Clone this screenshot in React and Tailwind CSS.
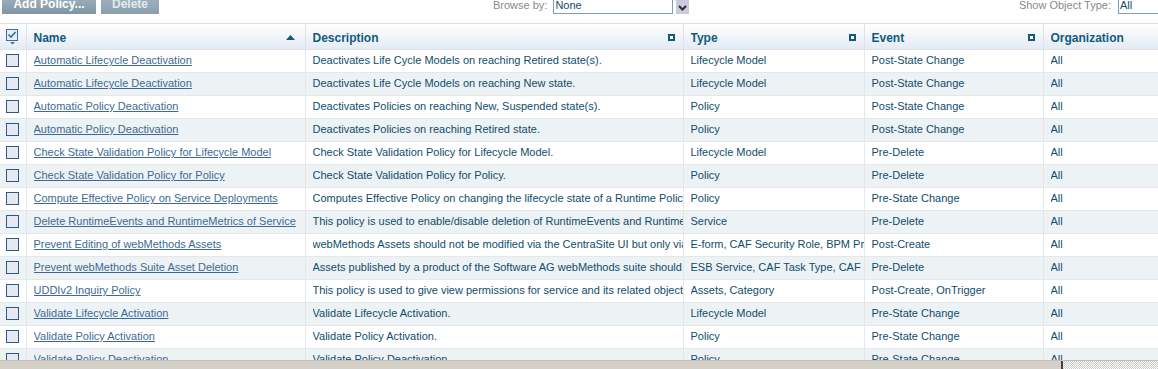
import React from 'react';

const rows = [
  ['Automatic Lifecycle Deactivation', 'Deactivates Life Cycle Models on reaching Retired state(s).', 'Lifecycle Model', 'Post-State Change', 'All'],
  ['Automatic Lifecycle Deactivation', 'Deactivates Life Cycle Models on reaching New state.', 'Lifecycle Model', 'Post-State Change', 'All'],
  ['Automatic Policy Deactivation', 'Deactivates Policies on reaching New, Suspended state(s).', 'Policy', 'Post-State Change', 'All'],
  ['Automatic Policy Deactivation', 'Deactivates Policies on reaching Retired state.', 'Policy', 'Post-State Change', 'All'],
  ['Check State Validation Policy for Lifecycle Model', 'Check State Validation Policy for Lifecycle Model.', 'Lifecycle Model', 'Pre-Delete', 'All'],
  ['Check State Validation Policy for Policy', 'Check State Validation Policy for Policy.', 'Policy', 'Pre-Delete', 'All'],
  ['Compute Effective Policy on Service Deployments', 'Computes Effective Policy on changing the lifecycle state of a Runtime Policy', 'Policy', 'Pre-State Change', 'All'],
  ['Delete RuntimeEvents and RuntimeMetrics of Service', 'This policy is used to enable/disable deletion of RuntimeEvents and RuntimeMetrics of a Service', 'Service', 'Pre-Delete', 'All'],
  ['Prevent Editing of webMethods Assets', 'webMethods Assets should not be modified via the CentraSite UI but only via webMethods Designer', 'E-form, CAF Security Role, BPM Process', 'Post-Create', 'All'],
  ['Prevent webMethods Suite Asset Deletion', 'Assets published by a product of the Software AG webMethods suite should not be deleted', 'ESB Service, CAF Task Type, CAF Service', 'Pre-Delete', 'All'],
  ['UDDIv2 Inquiry Policy', 'This policy is used to give view permissions for service and its related objects', 'Assets, Category', 'Post-Create, OnTrigger', 'All'],
  ['Validate Lifecycle Activation', 'Validate Lifecycle Activation.', 'Lifecycle Model', 'Pre-State Change', 'All'],
  ['Validate Policy Activation', 'Validate Policy Activation.', 'Policy', 'Pre-State Change', 'All'],
  ['Validate Policy Deactivation', 'Validate Policy Deactivation.', 'Policy', 'Pre-State Change', 'All'],
];

function FilterIcon() {
  return <span className="inline-block w-[7px] h-[7px] border-2 border-[#135a7d] bg-white" />;
}

function HeadCell({ children, last, icon }) {
  return (
    <th className={`h-[25px] pl-[7px] pr-2 pt-[3px] text-left font-bold text-[12px] text-[#135a7d] border-b border-[#dde3ea] ${last ? '' : 'border-r border-r-[#dfe3e8]'}`}>
      <div className="flex items-center justify-between whitespace-nowrap overflow-hidden">
        <span>{children}</span>
        {icon}
      </div>
    </th>
  );
}

function Cell({ children, last }) {
  return (
    <td className={`pl-[7px] pr-0 border-b border-[#e3e7ea] text-[#0f4d6d] ${last ? '' : 'border-r'}`}>
      <div className="whitespace-nowrap overflow-hidden">{children}</div>
    </td>
  );
}

export default function App() {
  return (
    <div className="w-[1158px] h-[369px] flex flex-col bg-white overflow-hidden text-[11px]" style={{ fontFamily: '"Liberation Sans", Arial, sans-serif' }}>
      {/* toolbar */}
      <div className="h-[14px] flex items-end shrink-0 overflow-hidden">
        <button className="ml-[2px] w-[94px] h-[22px] bg-gradient-to-b from-[#a9b9c4] to-[#7f95a4] text-white font-bold text-[12px] leading-none flex items-end justify-center pb-[4px]">
          Add Policy...
        </button>
        <button className="ml-[5px] w-[58px] h-[22px] bg-gradient-to-b from-[#a9b9c4] to-[#8a9eac] text-[#e4eaee] font-bold text-[12px] leading-none flex items-end justify-center pb-[4px]">
          Delete
        </button>
        <div className="ml-[334px] flex items-end h-full">
          <span className="text-[#8a8a8a] text-[11px] leading-none mb-[3px]">Browse by:</span>
          <div className="ml-[6px] w-[120px] h-[16px] border border-[#7f9db9] text-[#12496d] leading-none flex items-end pl-[1px] pb-[2px]">None</div>
          <div className="ml-[3px] w-[13px] h-[16px] bg-[#c9cbda] flex items-end justify-center pb-[3px]">
            <svg width="9" height="6" viewBox="0 0 9 6"><path d="M1 1l3.5 3.5L8 1" stroke="#2b2b3a" strokeWidth="2" fill="none" /></svg>
          </div>
        </div>
        <div className="ml-auto flex items-end h-full">
          <span className="text-[#8a8a8a] text-[11px] leading-none mb-[3px]">Show Object Type:</span>
          <div className="ml-[7px] w-[40px] h-[16px] border border-[#7f9db9] border-r-0 text-[#12496d] leading-none flex items-end pl-[1px] pb-[2px]">All</div>
        </div>
      </div>

      {/* table */}
      <div className="mt-[9px] flex-1 overflow-hidden border-t border-[#dedede]">
        <table className="table-fixed border-collapse w-[1158px]">
          <colgroup>
            <col className="w-[26px]" />
            <col className="w-[279px]" />
            <col className="w-[378px]" />
            <col className="w-[181px]" />
            <col className="w-[179px]" />
            <col />
          </colgroup>
          <thead className="bg-gradient-to-b from-white to-[#e4ebf5]">
            <tr>
              <th className="h-[25px] border-r border-[#dfe3e8] border-b border-b-[#dde3ea] align-middle pt-[2px]">
                <svg width="13" height="16" viewBox="0 0 13 16" className="mx-auto">
                  <rect x="0.5" y="0.5" width="11" height="11" fill="#e8ecf5" stroke="#3a6ea0" />
                  <path d="M2.5 5.5l2.5 2.5 4.5-5" stroke="#3a6ea0" strokeWidth="1.6" fill="none" />
                  <path d="M4 13h5l-2.5 2.5z" fill="#3a6ea0" />
                </svg>
              </th>
              <HeadCell icon={<svg width="9" height="5" viewBox="0 0 9 5" className="mr-[2px]"><path d="M0 5L4.5 0 9 5z" fill="#135a7d" /></svg>}>Name</HeadCell>
              <HeadCell icon={<FilterIcon />}>Description</HeadCell>
              <HeadCell icon={<FilterIcon />}>Type</HeadCell>
              <HeadCell icon={<FilterIcon />}>Event</HeadCell>
              <HeadCell last>Organization</HeadCell>
            </tr>
          </thead>
          <tbody>
            {rows.map((r, i) => (
              <tr key={i} className={i % 2 ? 'bg-[#edf2f5]' : 'bg-white'}>
                <td className="h-[23px] border-r border-b border-[#e3e7ea] align-middle">
                  <span className="block mx-auto w-[13px] h-[13px] border border-[#2d5a85] bg-[#e6e9f0]" />
                </td>
                <Cell>
                  <a href="#" className="text-[#3d6a94] underline">{r[0]}</a>
                </Cell>
                <Cell>{r[1]}</Cell>
                <Cell>{r[2]}</Cell>
                <Cell>{r[3]}</Cell>
                <Cell last>{r[4]}</Cell>
              </tr>
            ))}
          </tbody>
        </table>
      </div>

      {/* horizontal scrollbar */}
      <div className="h-[9px] shrink-0 flex border-t border-[#c3bfb7]">
        <div className="w-[1063px] bg-[#d4d0c8] border-r-2 border-[#404040]" />
        <div className="flex-1 bg-[repeating-conic-gradient(#c8c8c8_0_25%,#ffffff_0_50%)] bg-[length:2px_2px]" />
      </div>
    </div>
  );
}
